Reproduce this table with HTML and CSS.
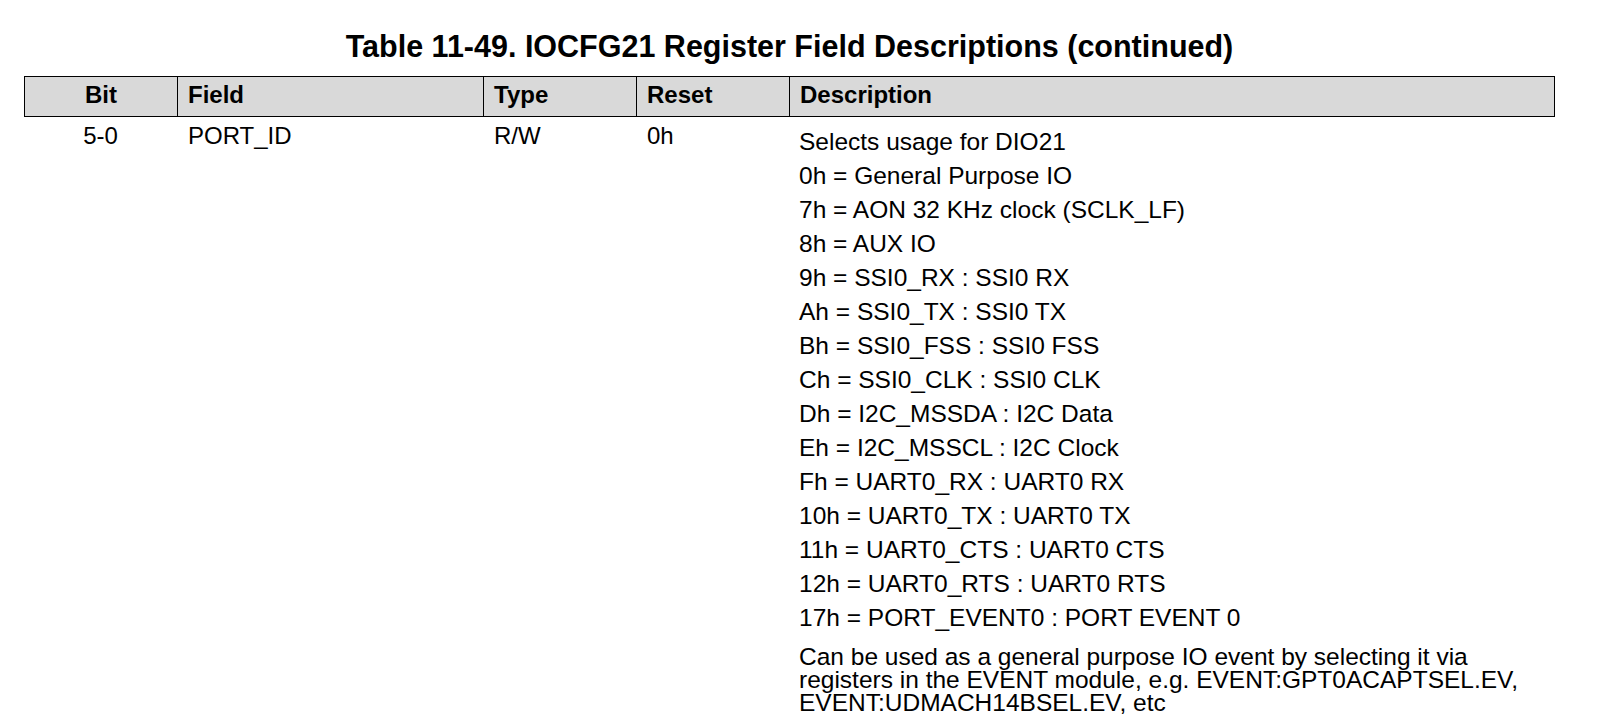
FILE: index.html
```html
<!DOCTYPE html>
<html lang="en">
<head>
<meta charset="utf-8">
<title>Table 11-49. IOCFG21 Register Field Descriptions (continued)</title>
<link rel="stylesheet" href="styles.css">
</head>
<body>
<main class="page">
  <h1 class="caption">Table 11-49. IOCFG21 Register Field Descriptions (continued)</h1>
  <table class="fields">
    <colgroup>
      <col class="c-bit">
      <col class="c-field">
      <col class="c-type">
      <col class="c-reset">
      <col class="c-desc">
    </colgroup>
    <thead>
      <tr>
        <th class="center">Bit</th>
        <th>Field</th>
        <th>Type</th>
        <th>Reset</th>
        <th class="last">Description</th>
      </tr>
    </thead>
    <tbody>
      <tr>
        <td class="center">5-0</td>
        <td>PORT_ID</td>
        <td>R/W</td>
        <td>0h</td>
        <td class="desc">
          <p class="line first">Selects usage for DIO21</p>
          <p class="line">0h = General Purpose IO</p>
          <p class="line">7h = AON 32 KHz clock (SCLK_LF)</p>
          <p class="line">8h = AUX IO</p>
          <p class="line">9h = SSI0_RX : SSI0 RX</p>
          <p class="line">Ah = SSI0_TX : SSI0 TX</p>
          <p class="line">Bh = SSI0_FSS : SSI0 FSS</p>
          <p class="line">Ch = SSI0_CLK : SSI0 CLK</p>
          <p class="line">Dh = I2C_MSSDA : I2C Data</p>
          <p class="line">Eh = I2C_MSSCL : I2C Clock</p>
          <p class="line">Fh = UART0_RX : UART0 RX</p>
          <p class="line">10h = UART0_TX : UART0 TX</p>
          <p class="line">11h = UART0_CTS : UART0 CTS</p>
          <p class="line">12h = UART0_RTS : UART0 RTS</p>
          <p class="line">17h = PORT_EVENT0 : PORT EVENT 0</p>
          <p class="note">Can be used as a general purpose IO event by selecting it via<br>registers in the EVENT module, e.g. EVENT:GPT0ACAPTSEL.EV,<br>EVENT:UDMACH14BSEL.EV, etc</p>
        </td>
      </tr>
    </tbody>
  </table>
</main>
</body>
</html>
```

FILE: styles.css
```css
html {
  overflow: hidden;
  background: #ffffff;
}

body {
  margin: 0;
  background: #ffffff;
  color: #000000;
  font-family: "Liberation Sans", Arial, sans-serif;
}

.page {
  width: 1531px;
  padding: 28px 0 0 24px;
}

.caption {
  margin: 0 0 12px;
  font-size: 30.5px;
  line-height: 36px;
  font-weight: bold;
  text-align: center;
}

.fields {
  width: 1531px;
  table-layout: fixed;
  border-collapse: separate;
  border-spacing: 0;
  font-size: 24px;
}

.c-bit { width: 153px; }
.c-field { width: 306px; }
.c-type { width: 153px; }
.c-reset { width: 153px; }
.c-desc { width: 766px; }

.fields th {
  background: #d9d9d9;
  border-top: 1px solid #000000;
  border-bottom: 1px solid #000000;
  border-left: 1px solid #000000;
  padding: 6px 10px 9px;
  line-height: 24px;
  font-weight: bold;
  text-align: left;
}

.fields th.last {
  border-right: 1px solid #000000;
}

.fields td {
  vertical-align: top;
  padding: 7px 10px 0 11px;
  line-height: 23px;
  text-align: left;
}

.fields .center {
  text-align: center;
  padding-left: 10px;
  padding-right: 10px;
}

.fields td.desc {
  padding-left: 10px;
  font-size: 24.5px;
}

.line {
  margin: 0 0 11px;
}

.line.first {
  margin-top: 6px;
}

.note {
  margin: 15.5px 0 0;
  line-height: 23px;
}
```
